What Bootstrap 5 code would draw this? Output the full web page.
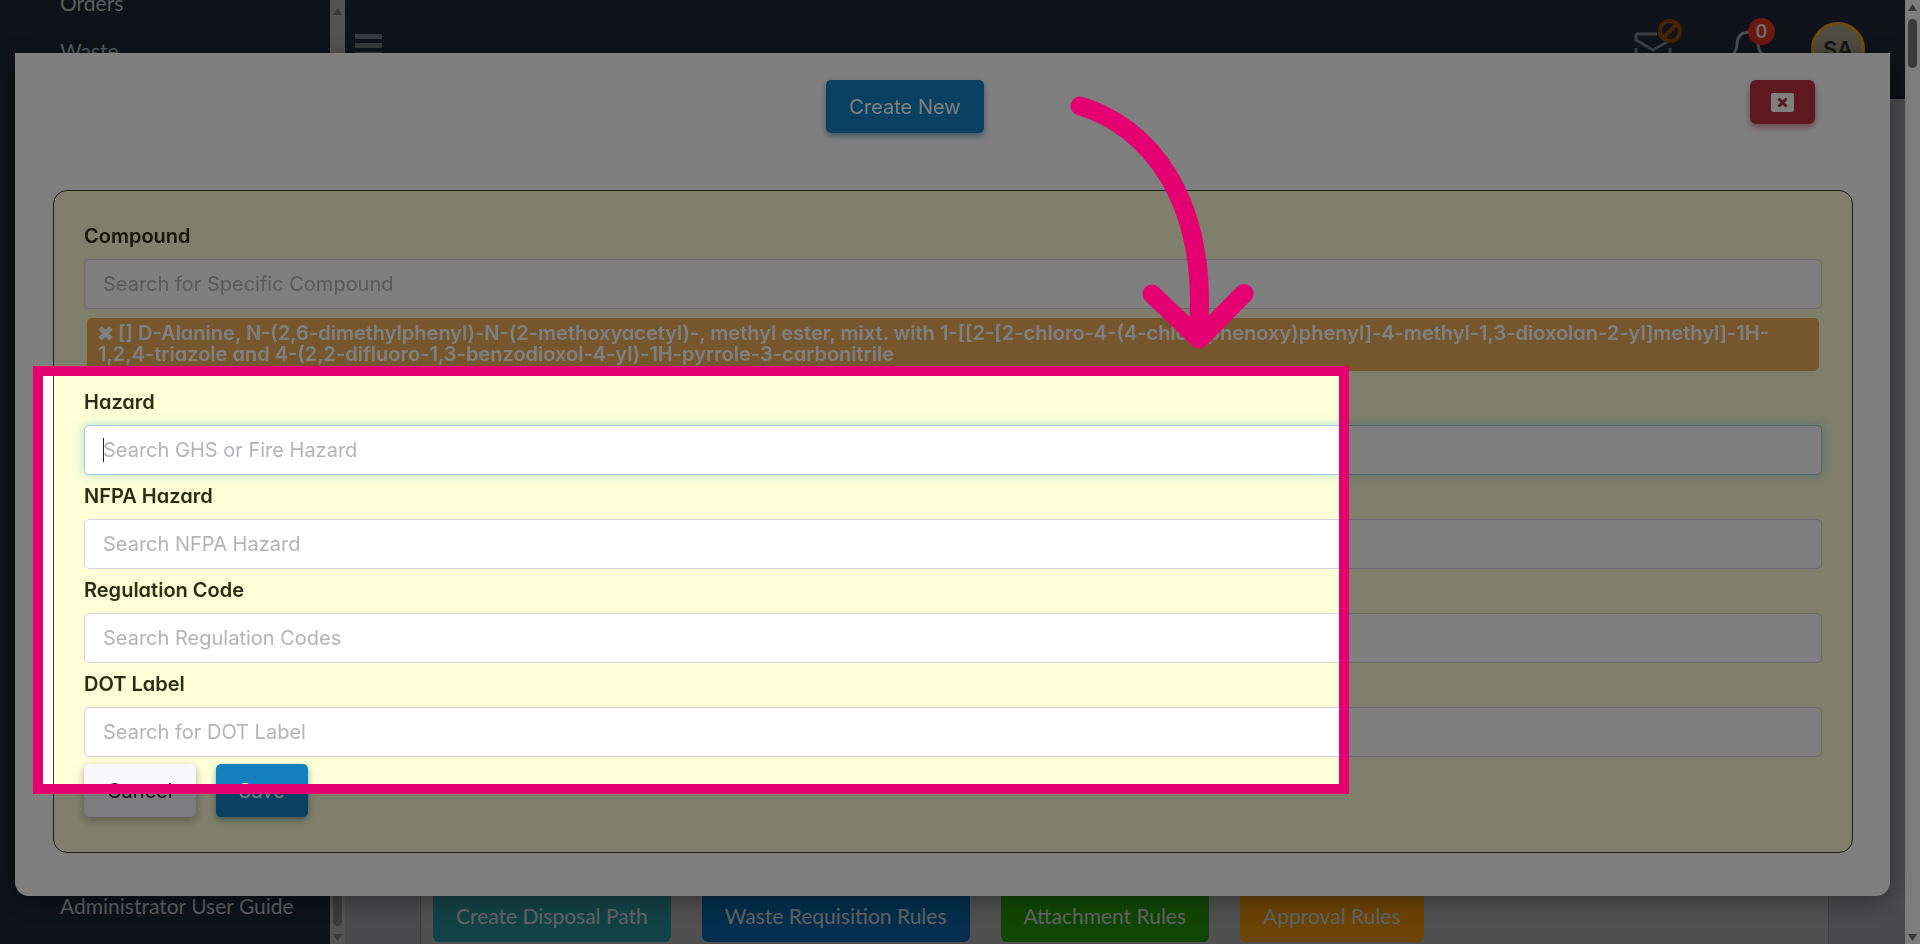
<!DOCTYPE html>
<html lang="en">
<head>
<meta charset="utf-8">
<meta name="viewport" content="width=device-width, initial-scale=1">
<title>Compound hazards</title>
<link href="https://cdn.jsdelivr.net/npm/bootstrap@5.3.0/dist/css/bootstrap.min.css" rel="stylesheet">
<style>
  :root { --ui: Inter, "Liberation Sans", sans-serif; --side: Lato, "Open Sans", sans-serif; --pink: #e50072; }
  body { font-family: var(--ui); font-feature-settings: "cv11"; font-size: 20px; }
  .shell { height: 100vh; }

  /* page behind the dialog */
  .sidebar { width: 330px; padding: 0 60px 26px; background: #1a2731; font: 21px/24px var(--side); }
  .sidebar a { color: #b4babe; text-decoration: none; white-space: nowrap; }
  .sidebar-top { margin-top: -9px; gap: 24px; }
  .rail { width: 15px; padding: 8px 0 3px; background: #a6a6a6; }
  .rail-page { background: #fafafa; }
  .rail svg { width: 9px; height: 7px; fill: #6e6e6e; }
  .thumb { width: 9px; height: 49px; border-radius: 5px; background: #767676; }
  .topbar { height: 99px; padding: 22px 40px 0 10px; background: linear-gradient(#20253a, #20282f 60px, #1a1e2c); }
  .burger { border: 0; background: none; }
  .tools { padding-right: 35px; gap: 49px; }
  .tool-badge { background: #d8301c; width: 27px; height: 27px; left: 22px; top: -4px; color: #ddd; font-size: 18px; line-height: 27px; }
  .ban { left: 30px; top: -4px; }
  .tool { width: 50px; height: 50px; }
  .avatar { width: 54px; height: 54px; border: 3px solid #d99d10; background: #9d9784; color: #2a2f33; font-size: 22px; font-weight: 600; }
  .content { background: #949498; padding: 0 76px 0 75px; }
  .panel-under { border: solid #7d7d7d; border-width: 0 1px; background: #a0a0a0; padding: 0 12px 2px; gap: 31px; }
  .panel-under .btn { font: 21px/28px var(--side); height: 60px; border: 0; padding: 20px 23px 12px; color: #c4c6ca; }
  .b-teal { background: #26848c; } .b-blue { background: #085c96; }
  .b-green { background: #218a08; } .b-amber { background: #d4860a; }

  /* dialog */
  .modal-dialog { margin: 53px 30px 0 15px; max-width: none; }
  .modal-content { border: 0; border-radius: 0 0 14px 14px; padding: 27px 37px 43px 38px; box-shadow: 0 4px 24px rgba(0,0,0,.35); }
  .dialog-head { padding: 0 38px 57px 7px; }
  .btn-main { height: 53px; padding: 0 23px; border: 0; border-radius: 5px; background: #1580c0; color: #fff; font-size: 20px; box-shadow: 0 3px 6px rgba(20,80,120,.5); }
  .btn-main:hover { background: #1272ab; color: #fff; }
  .btn-quiet { background: #f8f7fa; color: #222; box-shadow: 0 3px 8px rgba(0,0,0,.3); }
  .btn-x { width: 65px; height: 44px; padding: 1px 0 0; border: 0; background: #bc3040; box-shadow: 0 3px 6px rgba(150,30,50,.5); }
  .hazard-form { border: 1px solid #3c3c30; border-radius: 14px; background: #feffd6; padding: 29px 30px 35px; }
  .hazard-form label { display: block; font-weight: 600; line-height: 30px; margin: 6px 0 8px; color: #2b2e12; }
  .hazard-form label.first { margin-top: 1px; }
  .hazard-form label.after-tag { margin-top: 16px; }
  .hazard-form .form-control { height: 50px; padding: 0 18px; font-size: 20px; border-color: #d5d5de; border-radius: 5px; }
  .hazard-form .form-control::placeholder { color: #b5b3b8; opacity: 1; }
  .hazard-form .form-control.active-field { border-color: #9fcbe4; box-shadow: 0 0 10px 2px rgba(90,180,200,.3); }
  .compound-tag { margin: 9px 3px 0; padding: 5px 11px; min-height: 53px; border-radius: 5px; background: #ecae5b; color: #fff; font-weight: 600; line-height: 21px; }
  .compound-tag svg { vertical-align: -1px; }
  .caret { left: 19px; top: 13px; width: 1px; height: 24px; background: #222; }
  .form-actions { gap: 20px; margin-top: 7px; }

  /* guide layer over everything */
  .guide { z-index: 2000; pointer-events: none; }
  .spot { left: 33px; top: 366px; width: 1316px; height: 428px; border: 10px solid var(--pink); box-shadow: 0 0 0 4000px rgba(0,0,0,.5); }
  .arrow { left: 1060px; top: 86px; }
</style>
</head>
<body class="overflow-hidden">
<div class="shell d-flex overflow-hidden">
  <nav class="sidebar flex-shrink-0 d-flex flex-column justify-content-between" aria-label="Main">
    <div class="sidebar-top d-flex flex-column"><a href="#">Orders</a><a href="#">Waste</a></div>
    <a href="#">Administrator User Guide</a>
  </nav>
  <div class="rail flex-shrink-0 d-flex flex-column align-items-center justify-content-between">
    <svg viewBox="0 0 9 7"><path d="M4.500 0 9 7H0z"/></svg>
    <div class="d-flex flex-column align-items-center gap-2"><div class="thumb"></div><svg viewBox="0 0 9 7"><path d="M0 0h9L4.500 7z"/></svg></div>
  </div>
  <div class="flex-grow-1 d-flex flex-column">
    <header class="topbar flex-shrink-0 d-flex align-items-start">
      <button class="burger p-0 mt-2 me-auto" aria-label="Menu"><svg class="d-block" width="27" height="30" fill="#70747c"><path d="M0 4h27v5H0zM0 13h27v5H0zM0 22h27v5H0z"/></svg></button>
      <div class="tools d-flex">
        <div class="tool position-relative">
          <svg width="50" height="50" fill="none" stroke="#7c8088" stroke-width="3"><path d="M9 26v19h34V26M30 12H11Q9 12 9 14v4l17 10 14-8"/></svg>
          <svg class="ban position-absolute" width="27" height="27" fill="none" stroke="#8e460c" stroke-width="4"><circle cx="13" cy="13" r="10"/><path d="M6 20 20 6"/></svg>
        </div>
        <div class="tool position-relative">
          <svg width="50" height="50" fill="none" stroke="#94989f" stroke-width="3"><path d="M24 10c-10 0-13 6-13 13 0 4-2 7-5 11M32 20c0 8 2 10 5 13"/></svg>
          <span class="tool-badge position-absolute rounded-circle text-center fw-semibold">0</span>
        </div>
      </div>
      <div class="avatar rounded-circle d-flex align-items-center justify-content-center">SA</div>
    </header>
    <main class="content flex-grow-1 d-flex">
      <div class="panel-under flex-grow-1 d-flex align-items-end">
        <button class="btn b-teal">Create Disposal Path</button>
        <button class="btn b-blue">Waste Requisition Rules</button>
        <button class="btn b-green">Attachment Rules</button>
        <button class="btn b-amber">Approval Rules</button>
      </div>
    </main>
  </div>
  <div class="rail rail-page flex-shrink-0 d-flex flex-column align-items-center justify-content-between pt-1">
    <div class="d-flex flex-column align-items-center gap-2"><svg viewBox="0 0 9 7"><path d="M4.500 0 9 7H0z"/></svg><div class="thumb"></div></div>
    <svg viewBox="0 0 9 7"><path d="M0 0h9L4.500 7z"/></svg>
  </div>
</div>

<div class="modal d-block overflow-hidden" role="dialog" aria-label="Edit compound hazards">
  <div class="modal-dialog">
    <div class="modal-content">
      <div class="dialog-head d-flex align-items-start">
        <div class="flex-grow-1 text-center"><button class="btn btn-main">Create New</button></div>
        <button class="btn btn-x d-flex align-items-center justify-content-center" aria-label="Close">
          <svg width="23" height="19"><rect width="23" height="19" rx="2" fill="#fff"/><path d="m7.500 5.500 8 8m0-8-8 8" stroke="#b03050" stroke-width="3"/></svg>
        </button>
      </div>
      <form class="hazard-form">
        <label class="first" for="compound">Compound</label>
        <input class="form-control" id="compound" placeholder="Search for Specific Compound">
        <div class="compound-tag"><svg width="15" height="15" stroke="#fff" stroke-width="5" aria-hidden="true"><path d="m2 2 11 11m0-11L2 13"/></svg> [] D-Alanine, N-(2,6-dimethylphenyl)-N-(2-methoxyacetyl)-, methyl ester, mixt. with 1-[[2-[2-chloro-4-(4-chlorophenoxy)phenyl]-4-methyl-1,3-dioxolan-2-yl]methyl]-1H-1,2,4-triazole and 4-(2,2-difluoro-1,3-benzodioxol-4-yl)-1H-pyrrole-3-carbonitrile</div>
        <label class="after-tag" for="hazard">Hazard</label>
        <div class="position-relative">
          <input class="form-control active-field" id="hazard" placeholder="Search GHS or Fire Hazard">
          <span class="caret position-absolute"></span>
        </div>
        <label for="nfpa">NFPA Hazard</label>
        <input class="form-control" id="nfpa" placeholder="Search NFPA Hazard">
        <label for="regulation">Regulation Code</label>
        <input class="form-control" id="regulation" placeholder="Search Regulation Codes">
        <label for="dot">DOT Label</label>
        <input class="form-control" id="dot" placeholder="Search for DOT Label">
        <div class="form-actions d-flex">
          <button type="button" class="btn btn-main btn-quiet">Cancel</button>
          <button type="submit" class="btn btn-main">Save</button>
        </div>
      </form>
    </div>
  </div>
</div>

<div class="guide position-fixed top-0 start-0 w-100 h-100 overflow-hidden" aria-hidden="true">
  <div class="spot position-absolute"></div>
  <svg class="arrow position-absolute" width="210" height="280" viewBox="1060 86 210 280" fill="none" stroke="#e50072" stroke-width="19" stroke-linecap="round" stroke-linejoin="round"><path d="M1080 106C1145 125 1210 195 1198 336M1152 294l47 45 45-45.500"/></svg>
</div>
<script src="https://cdn.jsdelivr.net/npm/bootstrap@5.3.0/dist/js/bootstrap.bundle.min.js"></script>
</body>
</html>
